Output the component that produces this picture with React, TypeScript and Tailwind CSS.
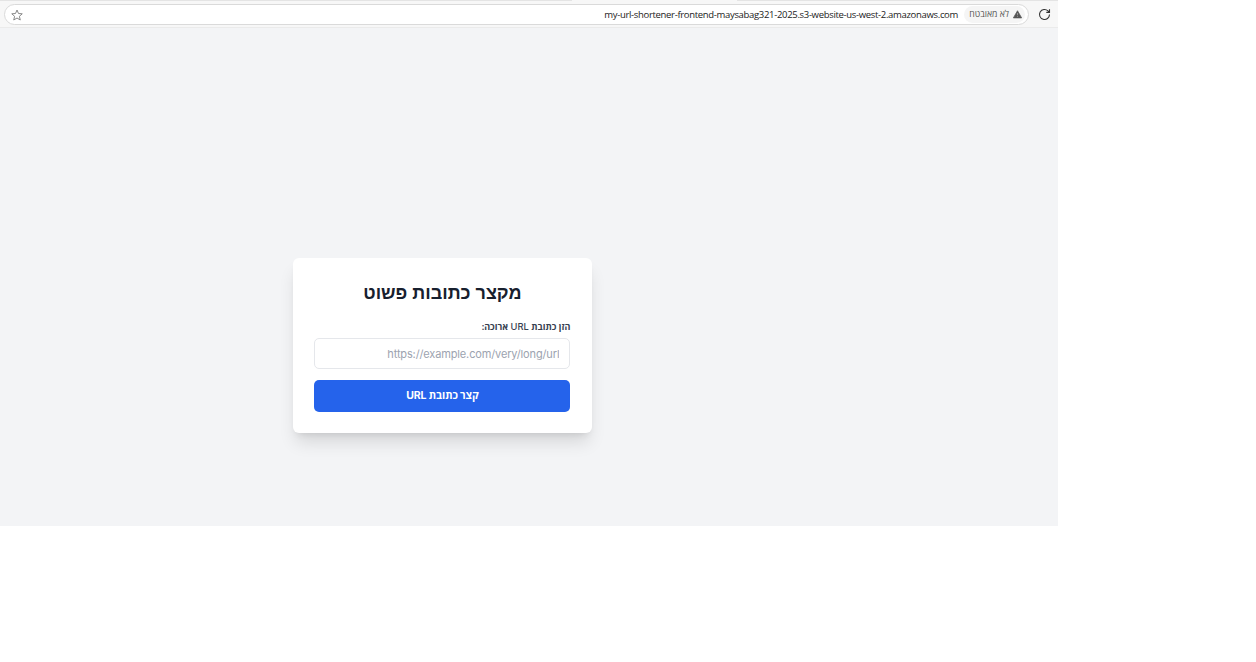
export default function App() {
  return (
    <div className="h-[662px] w-[1256px] overflow-hidden bg-white font-['Inter','Open_Sans','DejaVu_Sans',sans-serif]">
      <div className="flex h-[526px] w-[1058px] flex-col bg-[#f3f4f6]">
        <header className="flex h-[28px] shrink-0 flex-col border-b border-[#ebebeb] bg-[#f7f7f7] font-['Open_Sans',sans-serif]">
          <div className="flex h-px shrink-0 bg-[#e4e4e4]">
            <div className="ml-[572px] w-[165px] bg-[#f7f7f7]" />
          </div>
          <div className="flex flex-1 items-center pl-1">
            <div className="flex h-[21px] w-[1025px] items-center rounded-full border border-[#dadada] bg-white pl-[6px] pr-[3px]">
              <svg className="mt-px size-[12px]" viewBox="0 0 24 24" fill="none" stroke="#888" strokeWidth="2" strokeLinejoin="round">
                <path d="M12 2l3 7 7.500.6-5.700 5 1.700 7.400L12 18l-6.500 4 1.700-7.400-5.700-5L9 9z" />
              </svg>
              <span className="ml-auto pt-[2px] text-[9.500px] tracking-[-0.32px] text-[#222]">my-url-shortener-frontend-maysabag321-2025.s3-website-us-west-2.amazonaws.com</span>
              <div dir="rtl" className="ml-[6px] flex h-[17px] w-[61px] items-center justify-start gap-1 rounded-full bg-[#f5f5f5] pr-[3px] text-[8.700px] font-medium text-[#555]">
                <svg className="size-[9px] shrink-0" viewBox="0 0 12 12"><path d="M6 1L11.500 10.500H.5z" fill="#555" stroke="#555" strokeLinejoin="round" /><path d="M6 4v3M6 8v1" stroke="#aaa" /></svg>
                <span className="whitespace-nowrap pt-[2px]">לא מאובטח</span>
              </div>
            </div>
            <svg className="ml-[9px] size-[13px]" viewBox="0 0 13 13" fill="none" stroke="#333" strokeWidth="1.1">
              <path d="M11.500 6.500a5 5 0 1 1-1.500-3.600L11.500 4.400M11.500 1.200v3.200H8.300" />
            </svg>
          </div>
        </header>
        <main dir="rtl" className="flex flex-1">
          <section className="mr-[466px] mt-[230px] h-[175px] w-[299px] rounded-[6px] bg-white pl-[21.400px] pr-[21.600px] pt-[21px] shadow-[0_12px_17px_-3px_rgba(0,0,0,0.12),0_5px_7px_-4px_rgba(0,0,0,0.1)]">
            <h1 className="pt-px text-center font-['Liberation_Sans',sans-serif] text-[18px] font-bold leading-[27px] text-[#17202e]">מקצר כתובות פשוט</h1>
            <label className="mt-[13px] block text-[9.300px] font-medium leading-[13px] text-[#374151]"><span className="font-['Open_Sans',sans-serif] text-[9px] font-bold">הזן כתובת</span> URL <span className="font-['Open_Sans',sans-serif] text-[9px] font-bold">ארוכה:</span></label>
            <input className="mt-[5px] block h-[31px] w-full rounded-[5px] border border-[#e5e7eb] px-[10px] text-right text-[11px] tracking-[-0.14px] placeholder:text-[#9ca3af]" placeholder="https://example.com/very/long/url" />
            <button className="mt-[10.500px] block h-[32px] w-full rounded-[5px] bg-[#2563eb] pt-px text-[10.500px] font-bold tracking-[-0.1px] text-white">קצר כתובת URL</button>
          </section>
        </main>
      </div>
    </div>
  );
}
